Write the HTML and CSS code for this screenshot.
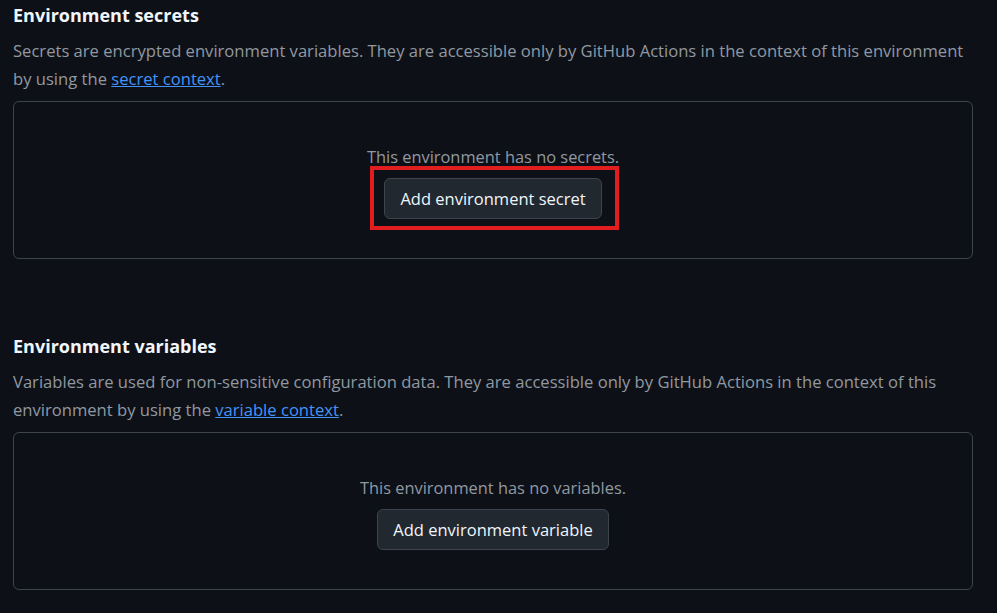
FILE: index.html
```html
<!DOCTYPE html>
<html lang="en">
<head>
<meta charset="utf-8">
<title>Environment</title>
<link rel="stylesheet" href="styles.css">
</head>
<body>
<div class="page">
  <section class="section">
    <h3 class="heading">Environment secrets</h3>
    <p class="desc">Secrets are encrypted environment variables. They are accessible only by GitHub Actions in the context of this environment by using the <a href="#" class="link">secret context</a>.</p>
    <div class="card">
      <div class="empty">This environment has no secrets.</div>
      <div class="btn-wrap">
        <button class="btn">Add environment secret</button>
        <span class="highlight"></span>
      </div>
    </div>
  </section>
  <section class="section second">
    <h3 class="heading">Environment variables</h3>
    <p class="desc">Variables are used for non-sensitive configuration data. They are accessible only by GitHub Actions in the context of this environment by using the <a href="#" class="link">variable context</a>.</p>
    <div class="card">
      <div class="empty">This environment has no variables.</div>
      <div class="btn-wrap">
        <button class="btn">Add environment variable</button>
      </div>
    </div>
  </section>
</div>
</body>
</html>
```
FILE: styles.css
```css
html, body {
  margin: 0;
  padding: 0;
  background: #0d1117;
}
body {
  font-family: "Open Sans", "Noto Sans", sans-serif;
  color: #f0f6fc;
}
.page {
  padding: 0 24px 0 13px;
}
.section {
  display: flex;
  flex-direction: column;
}
.second {
  margin-top: 72px;
}
.heading {
  margin: 0;
  font-size: 18px;
  font-weight: 700;
  line-height: 30px;
  color: #f0f6fc;
}
.desc {
  margin: 7px 0 0 0;
  font-size: 16.6px;
  line-height: 28px;
  color: #9198a1;
}
.link {
  color: #4493f8;
  text-decoration: underline;
}
.card {
  margin-top: 8px;
  border: 1px solid #3d444d;
  border-radius: 6px;
  height: 158px;
  padding-top: 43px;
  box-sizing: border-box;
  display: flex;
  flex-direction: column;
  align-items: center;
}
.empty {
  font-size: 16.4px;
  line-height: 24px;
  color: #9198a1;
}
.btn-wrap {
  position: relative;
  margin-top: 9px;
}
.btn {
  font-family: inherit;
  font-size: 16.5px;
  color: #f0f6fc;
  background: #212830;
  border: 1px solid #3d444d;
  border-radius: 6px;
  height: 41px;
  padding: 0 15px;
  cursor: pointer;
}
.highlight {
  position: absolute;
  left: -14px;
  top: -12px;
  right: -17px;
  bottom: -11px;
  border: 4px solid #e11d20;
  pointer-events: none;
}
```
